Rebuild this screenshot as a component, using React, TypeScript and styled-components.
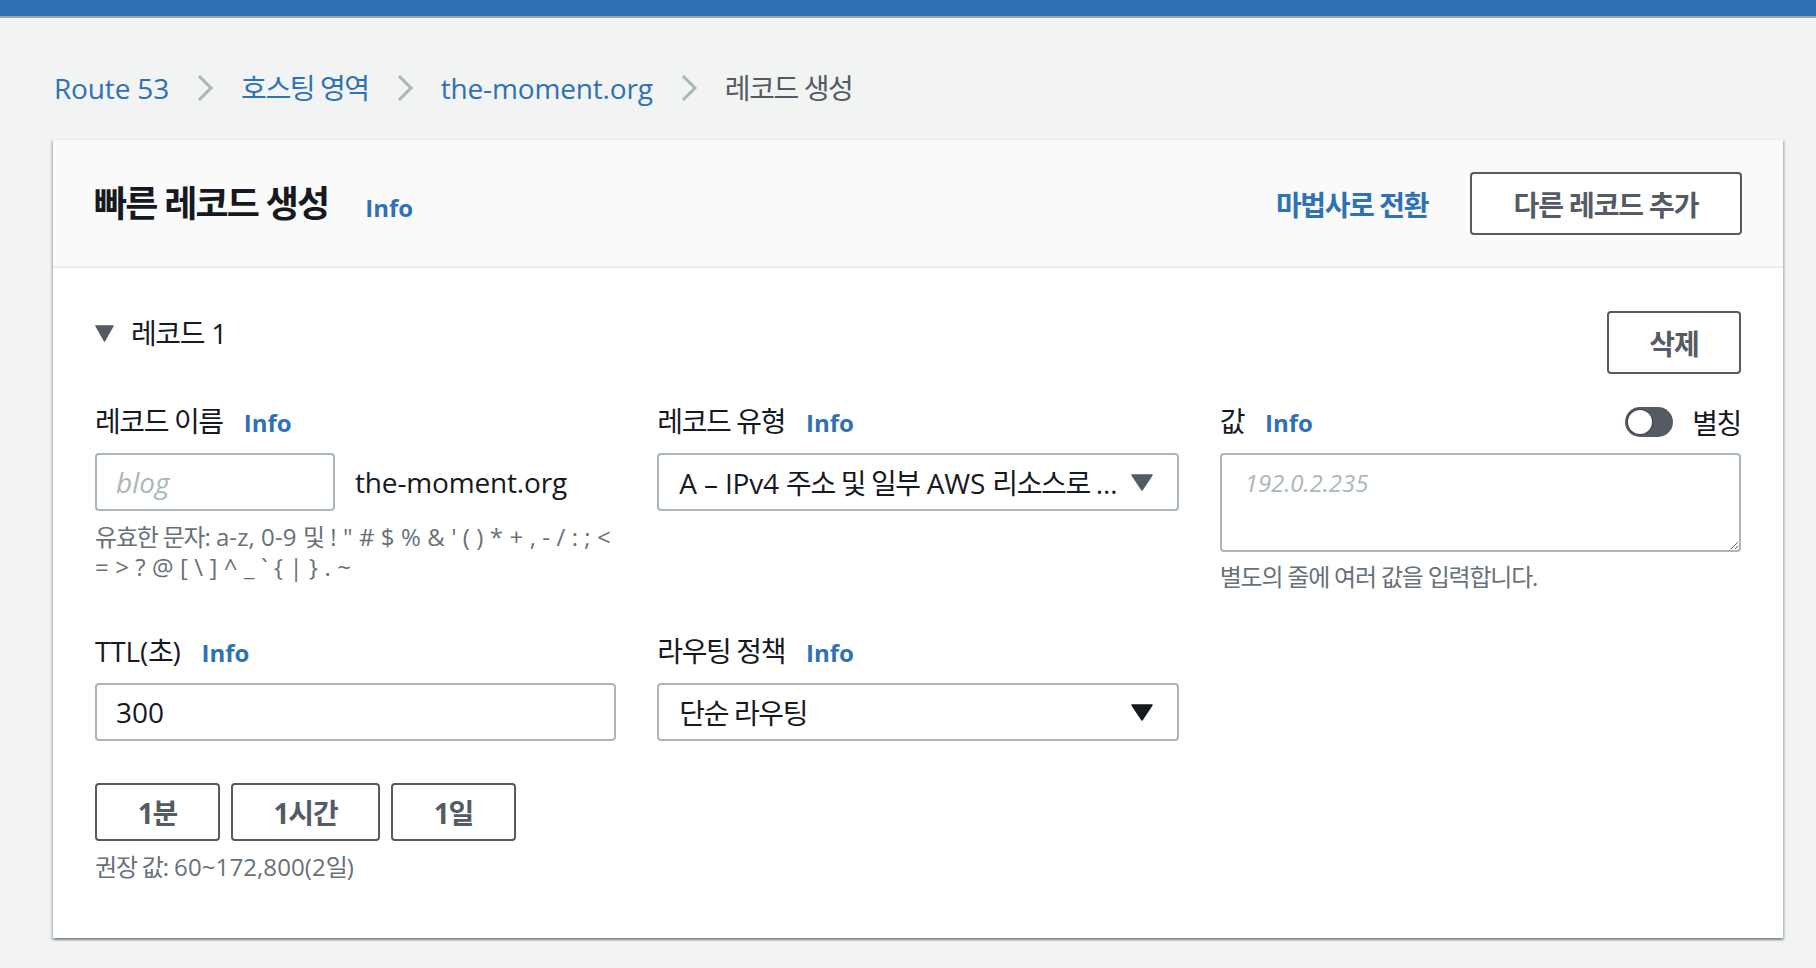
import React from "react";
import styled, { createGlobalStyle } from "styled-components";

const GlobalStyle = createGlobalStyle`
  html, body {
    margin: 0;
    padding: 0;
    background: #f2f3f3;
  }
  body {
    font-family: "Open Sans", "Noto Sans CJK KR", sans-serif;
    font-feature-settings: "palt";
    letter-spacing: -0.01em;
    color: #16191f;
  }
  * { box-sizing: border-box; }
`;

const Ko = styled.span`
  letter-spacing: -0.05em;
`;

const TopBar = styled.div`
  height: 18px;
  background: #2f71b5;
  border-bottom: 2px solid #9aa6ad;
`;

const Crumbs = styled.nav`
  display: flex;
  align-items: center;
  padding: 50px 0 0 54px;
  height: 40px;
  box-sizing: content-box;
  font-size: 28px;
  line-height: 40px;
`;

const Crumb = styled.a<{ $current?: boolean }>`
  color: ${(p) => (p.$current ? "#545b64" : "#2f71b5")};
  text-decoration: none;
  white-space: nowrap;
`;

const Sep = styled.svg`
  width: 18px;
  height: 28px;
  margin: 0 27px;
  flex: none;
`;

const Main = styled.main`
  padding: 31px 33px 30px 53px;
`;

const Card = styled.section`
  background: #ffffff;
  border-top: 1px solid #eaeded;
  box-shadow: 0 2px 2px 0 rgba(0, 28, 36, 0.3), 2px 2px 2px 0 rgba(0, 28, 36, 0.15),
    -2px 2px 2px 0 rgba(0, 28, 36, 0.15);
`;

const CardHeader = styled.header`
  display: flex;
  align-items: center;
  justify-content: space-between;
  background: #fafafa;
  border-bottom: 2px solid #eaeded;
  padding: 32px 41px 31px 41px;
`;

const TitleGroup = styled.div`
  display: flex;
  align-items: baseline;
  gap: 37px;
`;

const Title = styled.h2`
  margin: 0;
  font-size: 36px;
  font-weight: 700;
  line-height: 44px;
  letter-spacing: -0.05em;
  color: #16191f;
`;

const InfoLink = styled.a`
  color: #2f71b5;
  font-size: 24px;
  font-weight: 700;
  letter-spacing: 0;
  text-decoration: none;
`;

const Actions = styled.div`
  display: flex;
  align-items: center;
  gap: 42px;
`;

const TextLink = styled.a`
  color: #2f71b5;
  font-size: 28px;
  font-weight: 700;
  letter-spacing: -0.05em;
  text-decoration: none;
`;

const OutlineButton = styled.button<{ $w: number; $h?: number }>`
  height: ${(p) => p.$h ?? 63}px;
  width: ${(p) => p.$w}px;
  padding: 0;
  background: #ffffff;
  border: 2px solid #545b64;
  border-radius: 4px;
  color: #545b64;
  font-family: inherit;
  font-feature-settings: "palt";
  font-size: 28px;
  font-weight: 700;
  letter-spacing: -0.04em;
  cursor: pointer;
`;

const CardBody = styled.div`
  padding: 43px 42px 56px 42px;
`;

const RecordHead = styled.div`
  display: flex;
  align-items: flex-start;
  justify-content: space-between;
  margin-bottom: 28px;
`;

const Expander = styled.div`
  display: flex;
  align-items: center;
  gap: 17px;
  padding-top: 2px;
  font-size: 28px;
  line-height: 40px;
  color: #16191f;
`;

const Grid = styled.div`
  display: grid;
  grid-template-columns: repeat(3, 1fr);
  column-gap: 41px;
  row-gap: 40px;
`;

const Field = styled.div`
  display: flex;
  flex-direction: column;
  min-width: 0;
`;

const LabelRow = styled.div`
  display: flex;
  align-items: center;
  justify-content: space-between;
  height: 40px;
  margin-bottom: 11px;
`;

const Label = styled.div`
  display: flex;
  align-items: baseline;
  gap: 21px;
  font-size: 28px;
  line-height: 40px;
  color: #16191f;
`;

const NameRow = styled.div`
  display: flex;
  align-items: center;
  gap: 20px;
  font-size: 28px;
`;

const TextInput = styled.input<{ $w?: number }>`
  width: ${(p) => (p.$w ? `${p.$w}px` : "100%")};
  height: 58px;
  padding: 0 19px;
  border: 2px solid #aab7b8;
  border-radius: 4px;
  background: #ffffff;
  font-family: inherit;
  font-feature-settings: "palt";
  font-size: 28px;
  color: #16191f;
  outline: none;
  &::placeholder {
    color: #aab7b8;
    font-style: italic;
  }
`;

const SelectBox = styled.div`
  display: flex;
  align-items: center;
  gap: 12px;
  height: 58px;
  padding: 0 24px 0 20px;
  border: 2px solid #aab7b8;
  border-radius: 4px;
  background: #ffffff;
  font-size: 28px;
  color: #16191f;
`;

const SelectText = styled.span`
  flex: 1;
  min-width: 0;
  overflow: hidden;
  white-space: nowrap;
  text-overflow: ellipsis;
`;

const Caret = styled.svg`
  width: 22px;
  height: 17px;
  flex: none;
`;

const Help = styled.div<{ $gap?: number }>`
  margin-top: ${(p) => p.$gap ?? 11}px;
  font-size: 24px;
  line-height: 30px;
  letter-spacing: 0.004em;
  color: #687078;
`;

const TextArea = styled.textarea`
  width: 100%;
  height: 99px;
  padding: 10px 23px;
  border: 2px solid #aab7b8;
  border-radius: 4px;
  font-family: inherit;
  font-size: 24px;
  line-height: 36px;
  color: #16191f;
  resize: vertical;
  outline: none;
  display: block;
  &::placeholder {
    color: #aab7b8;
    font-style: italic;
  }
`;

const ToggleWrap = styled.label`
  display: flex;
  align-items: center;
  gap: 19px;
  font-size: 28px;
  letter-spacing: -0.05em;
  color: #16191f;
`;

const Track = styled.span`
  position: relative;
  width: 48px;
  height: 30px;
  border-radius: 15px;
  background: #545b64;
`;

const Knob = styled.span`
  position: absolute;
  left: 3px;
  top: 3px;
  width: 24px;
  height: 24px;
  border-radius: 50%;
  background: #ffffff;
  box-shadow: 0 0 0 1px rgba(22, 25, 31, 0.35);
`;

const ButtonGroup = styled.div`
  display: flex;
  gap: 11px;
  margin-top: 42px;
`;

const Chevron = () => (
  <Sep viewBox="0 0 18 28">
    <path d="M3 2 L15 14 L3 26" fill="none" stroke="#aab7b8" strokeWidth="3" />
  </Sep>
);

const Triangle = ({ color }: { color: string }) => (
  <Caret viewBox="0 0 22 17">
    <path d="M1 1 H21 L11 16 Z" fill={color} stroke={color} strokeWidth="1.5" strokeLinejoin="round" />
  </Caret>
);

export default function App() {
  return (
    <>
      <GlobalStyle />
      <TopBar />
      <Crumbs>
        <Crumb href="#">Route 53</Crumb>
        <Chevron />
        <Crumb href="#">
          <Ko>호스팅 영역</Ko>
        </Crumb>
        <Chevron />
        <Crumb href="#">the-moment.org</Crumb>
        <Chevron />
        <Crumb $current>
          <Ko>레코드 생성</Ko>
        </Crumb>
      </Crumbs>
      <Main>
        <Card>
          <CardHeader>
            <TitleGroup>
              <Title>빠른 레코드 생성</Title>
              <InfoLink href="#">Info</InfoLink>
            </TitleGroup>
            <Actions>
              <TextLink href="#">마법사로 전환</TextLink>
              <OutlineButton $w={272}>다른 레코드 추가</OutlineButton>
            </Actions>
          </CardHeader>
          <CardBody>
            <RecordHead>
              <Expander>
                <svg width="19" height="17" viewBox="0 0 19 17">
                  <path d="M1 1 H18 L9.5 16 Z" fill="#545b64" stroke="#545b64" strokeWidth="1.5" strokeLinejoin="round" />
                </svg>
                <span>
                  <Ko>레코드</Ko> 1
                </span>
              </Expander>
              <OutlineButton $w={134}>삭제</OutlineButton>
            </RecordHead>
            <Grid>
              <Field>
                <LabelRow>
                  <Label>
                    <Ko>레코드 이름</Ko>
                    <InfoLink href="#">Info</InfoLink>
                  </Label>
                </LabelRow>
                <NameRow>
                  <TextInput $w={240} placeholder="blog" />
                  <span>the-moment.org</span>
                </NameRow>
                <Help>
                  <Ko>유효한 문자:</Ko> a-z, 0-9 <Ko>및</Ko> ! " # $ % &amp; ' ( ) * + , - / : ; &lt; = &gt; ? @ [ \ ] ^ _ ` {"{"} | {"}"} . ~
                </Help>
              </Field>
              <Field>
                <LabelRow>
                  <Label>
                    <Ko>레코드 유형</Ko>
                    <InfoLink href="#">Info</InfoLink>
                  </Label>
                </LabelRow>
                <SelectBox>
                  <SelectText>
                    A – IPv4 <Ko>주소 및 일부</Ko> AWS <Ko>리소스로 트래픽 라우팅</Ko>
                  </SelectText>
                  <Triangle color="#545b64" />
                </SelectBox>
              </Field>
              <Field>
                <LabelRow>
                  <Label>
                    <Ko>값</Ko>
                    <InfoLink href="#">Info</InfoLink>
                  </Label>
                  <ToggleWrap>
                    <Track>
                      <Knob />
                    </Track>
                    별칭
                  </ToggleWrap>
                </LabelRow>
                <TextArea placeholder="192.0.2.235" />
                <Help $gap={10}>
                  <Ko>별도의 줄에 여러 값을 입력합니다.</Ko>
                </Help>
              </Field>
              <Field>
                <LabelRow>
                  <Label>
                    <span>
                      TTL(<Ko>초</Ko>)
                    </span>
                    <InfoLink href="#">Info</InfoLink>
                  </Label>
                </LabelRow>
                <TextInput defaultValue="300" />
                <ButtonGroup>
                  <OutlineButton $w={125} $h={58}>1분</OutlineButton>
                  <OutlineButton $w={149} $h={58}>1시간</OutlineButton>
                  <OutlineButton $w={125} $h={58}>1일</OutlineButton>
                </ButtonGroup>
                <Help>
                  <Ko>권장 값:</Ko> 60~172,800(2<Ko>일</Ko>)
                </Help>
              </Field>
              <Field>
                <LabelRow>
                  <Label>
                    <Ko>라우팅 정책</Ko>
                    <InfoLink href="#">Info</InfoLink>
                  </Label>
                </LabelRow>
                <SelectBox>
                  <SelectText>
                    <Ko>단순 라우팅</Ko>
                  </SelectText>
                  <Triangle color="#16191f" />
                </SelectBox>
              </Field>
              <div />
            </Grid>
          </CardBody>
        </Card>
      </Main>
    </>
  );
}
